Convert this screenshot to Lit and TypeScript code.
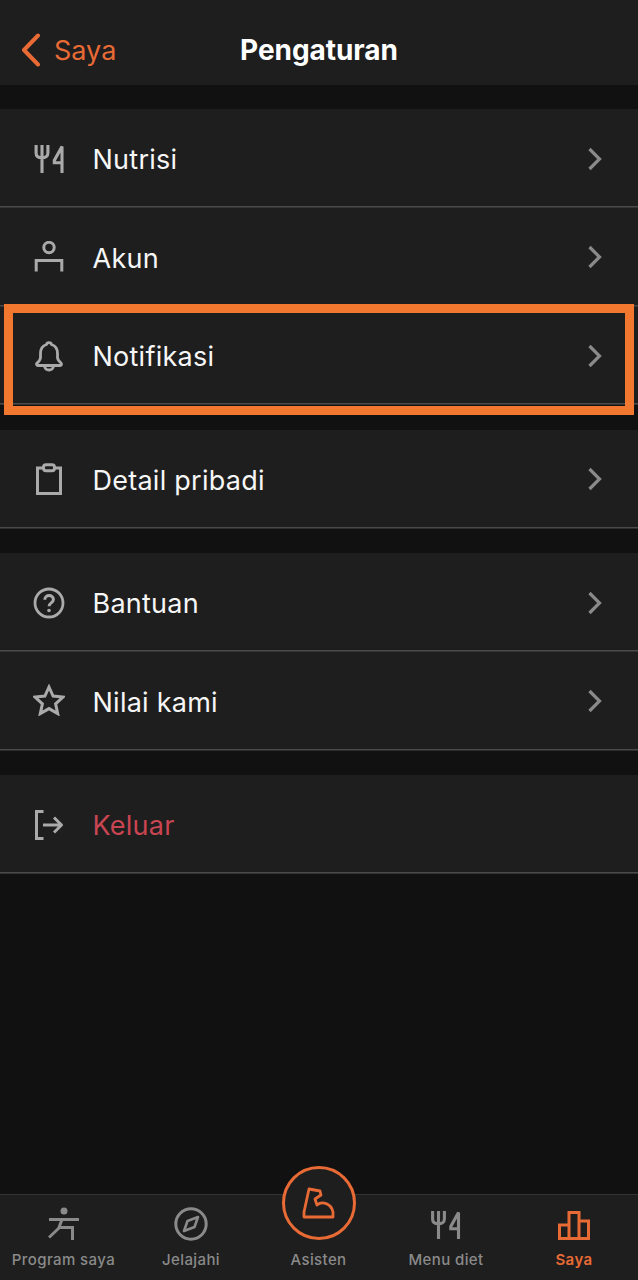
import { LitElement, html, css, svg } from "lit";
import { customElement } from "lit/decorators.js";

const fork = svg`<path d="M1.600 0v8c0 3 2.200 4.800 5.900 4.800s5.900-1.800 5.900-4.800V0M7.500 0v28" fill="none" stroke="currentColor" stroke-width="3.100"/><path d="M27.500 28V1.500L19.800 15.500v2.300H29" fill="none" stroke="currentColor" stroke-width="3.100"/>`;

const rows = (n: string) => {
  const m: Record<string, unknown> = {
    nutrisi: html`<svg class="ic shift" width="30" height="30" viewBox="0 0 30 30"><g transform="translate(0.5 1)">${fork}</g></svg>`,
    akun: html`<svg class="ic shift" width="30" height="32" viewBox="0 0 30 32" fill="none" stroke="currentColor" stroke-width="3"><circle cx="15" cy="6.500" r="5.200"/><path d="M2.200 30.500V19.500h25.600v11"/></svg>`,
    bell: html`<svg class="ic shift" width="30" height="32" viewBox="0 0 30 32" fill="none" stroke="currentColor" stroke-width="2.800" stroke-linejoin="round"><path d="M12.500 4.500c.3-2.600 4.700-2.600 5 0 4.600 1.400 6 5 6 9v4c0 2.400 1.600 3.800 3.600 5.600.9 1 .3 2.400-1 2.400H4c-1.400 0-2-1.400-1-2.400 2-1.800 3.500-3.200 3.500-5.600v-4c0-4 1.400-7.600 6-9z"/><path d="M10.500 25.500c0 6 9 6 9 0"/></svg>`,
    clip: html`<svg class="ic shift" width="30" height="32" viewBox="0 0 30 32" fill="none" stroke="currentColor" stroke-width="3"><path d="M9 5H3.500v25.500h23V5H21"/><rect x="9.500" y="1.800" width="11" height="6" rx="2.500"/></svg>`,
    help: html`<svg class="ic shift" width="32" height="32" viewBox="0 0 32 32" fill="none" stroke="currentColor" stroke-width="2.800"><circle cx="16" cy="16" r="14"/><path d="M11.800 12.800c0-5.600 8.600-5.600 8.600-.2 0 3.400-4.300 3.200-4.300 6.600" stroke-width="3"/><circle cx="16" cy="23.500" r="1.800" fill="currentColor" stroke="none"/></svg>`,
    star: html`<svg class="ic" width="32" height="32" viewBox="0 0 32 32" fill="none" stroke="currentColor" stroke-width="3" stroke-linejoin="miter"><path d="M16 3l4.100 9 9.900 1.100-7.400 6.700 2.100 9.800-8.700-5-8.700 5 2.100-9.800-7.400-6.700 9.900-1.100z"/></svg>`,
    out: html`<svg class="ic shift" width="30" height="30" viewBox="0 0 30 30" fill="none" stroke="currentColor" stroke-width="3"><path d="M9.500 1.500H2.500v27h7"/><path d="M9 15h18M20 7.500l7.500 7.500-7.500 7.500" stroke-linejoin="round"/></svg>`,
  };
  return m[n];
};

@customElement("app-root")
export class AppRoot extends LitElement {
  static styles = css`
    :host { display: block; width: 638px; height: 1280px; background: #111111; font-family: Inter, "Liberation Sans", sans-serif; overflow: hidden; position: relative; }
    .page { display: flex; flex-direction: column; height: 1280px; }
    header { height: 85px; flex: none; background: #1e1e1e; display: grid; grid-template-columns: 1fr auto 1fr; align-items: center; padding-top: 15px; box-sizing: border-box; }
    .back { display: flex; align-items: center; color: #e86a35; font-size: 27px; gap: 13px; padding-left: 21px; }
    .title { color: #fff; font-size: 28px; font-weight: 700; letter-spacing: -0.05px; }
    .group { background: #1e1e1e; margin-top: 25px; display: flex; flex-direction: column; }
    .group.first { margin-top: 24px; }
    .row { height: 97px; margin-bottom: 1.500px; flex: none; display: flex; align-items: center; color: #f6f6f6; font-size: 27px; position: relative; box-shadow: 0 1.500px 0 #4a4a4a; }
    .slotin { width: 98px; flex: none; display: flex; justify-content: center; color: #aaaaaa; }
    .ic { display: block; }
    .shift { margin-top: 2px; }
    .label { flex: 1; margin-left: -5.500px; letter-spacing: 0.25px; padding-top: 4px; }
    .red { color: #c94552; }
    .chev { margin-right: 35px; color: #8a8a8a; display: block; margin-top: 2px; }
    .hl { position: absolute; left: 4px; top: 304px; width: 630px; height: 111px; box-sizing: border-box; border: 9px solid #f2772f; pointer-events: none; }
    .spacer { flex: 1; }
    nav { height: 86px; flex: none; background: #1e1e1e; border-top: 1.500px solid #333; box-sizing: border-box; display: grid; grid-template-columns: 127px 128px 127px 128px 128px; position: relative; }
    .tab { display: flex; flex-direction: column; align-items: center; color: #8a8a8a; font-size: 15px; font-weight: 500; letter-spacing: 0.4px; }
    .tab .iw { height: 54px; display: flex; align-items: flex-end; padding-bottom: 8px; box-sizing: border-box; }
    .tab .t { margin-top: 1px; }
    .tab.on { color: #e86a35; font-weight: 600; }
    .fab { position: absolute; left: 282px; top: -29px; width: 74px; height: 74px; border-radius: 50%; border: 3.500px solid #e86a35; box-sizing: border-box; background: #1e1e1e; display: flex; align-items: center; justify-content: center; color: #e86a35; }
  `;

  private row(icon: string, label: string, red = false) {
    return html`<div class="row">
      <div class="slotin">${rows(icon)}</div>
      <div class="label ${red ? "red" : ""}">${label}</div>
      ${red ? "" : html`<svg class="chev" width="16" height="24" viewBox="0 0 16 24" fill="none" stroke="currentColor" stroke-width="3.200"><path d="M2.500 2l10 10-10 10"/></svg>`}
    </div>`;
  }

  render() {
    return html`<div class="page">
      <header>
        <div class="back">
          <svg width="20" height="34" viewBox="0 0 20 34" fill="none" stroke="currentColor" stroke-width="4" stroke-linecap="round" stroke-linejoin="round"><path d="M17 2.500L3 17l14 14.500"/></svg>
          <span>Saya</span>
        </div>
        <div class="title">Pengaturan</div>
        <div></div>
      </header>
      <div class="group first">
        ${this.row("nutrisi", "Nutrisi")}
        ${this.row("akun", "Akun")}
        ${this.row("bell", "Notifikasi")}
      </div>
      <div class="group">${this.row("clip", "Detail pribadi")}</div>
      <div class="group">
        ${this.row("help", "Bantuan")}
        ${this.row("star", "Nilai kami")}
      </div>
      <div class="group">${this.row("out", "Keluar", true)}</div>
      <div class="spacer"></div>
      <nav>
        <div class="tab"><div class="iw"><svg width="32" height="34" viewBox="0 0 32 34" fill="none" stroke="currentColor" stroke-width="3"><circle cx="16" cy="4" r="3.500" fill="currentColor" stroke="none"/><path d="M1 12.500h30M14 12.500l-3 8h13.500V33M11 21L1 30.500"/></svg></div><div class="t">Program saya</div></div>
        <div class="tab"><div class="iw"><svg width="34" height="34" viewBox="0 0 34 34" fill="none" stroke="currentColor" stroke-width="3"><circle cx="17" cy="17" r="15.200"/><path d="M24 10l-3.500 10L10 24l3.500-10z" stroke-width="2.600" stroke-linejoin="round"/></svg></div><div class="t">Jelajahi</div></div>
        <div class="tab"><div class="iw"></div><div class="t">Asisten</div></div>
        <div class="tab"><div class="iw"><svg width="30" height="30" viewBox="0 0 30 30">${fork}</svg></div><div class="t">Menu diet</div></div>
        <div class="tab on"><div class="iw"><svg width="32" height="30" viewBox="0 0 32 30" fill="none" stroke="currentColor" stroke-width="3"><path d="M1.500 27.500h29V10h-9.500V1.500h-10V14H1.500zM11 27.500V14M21 27.500V10"/></svg></div><div class="t">Saya</div></div>
        <div class="fab"><svg width="36" height="36" viewBox="0 0 36 36" fill="none" stroke="currentColor" stroke-width="2.800" stroke-linejoin="round" stroke-linecap="round"><path d="M8 4l11 2 1 4-6 4 2 6c5-4 14-2 16 7v5H3v-5z"/></svg></div>
      </nav>
      <div class="hl"></div>
    </div>`;
  }
}
